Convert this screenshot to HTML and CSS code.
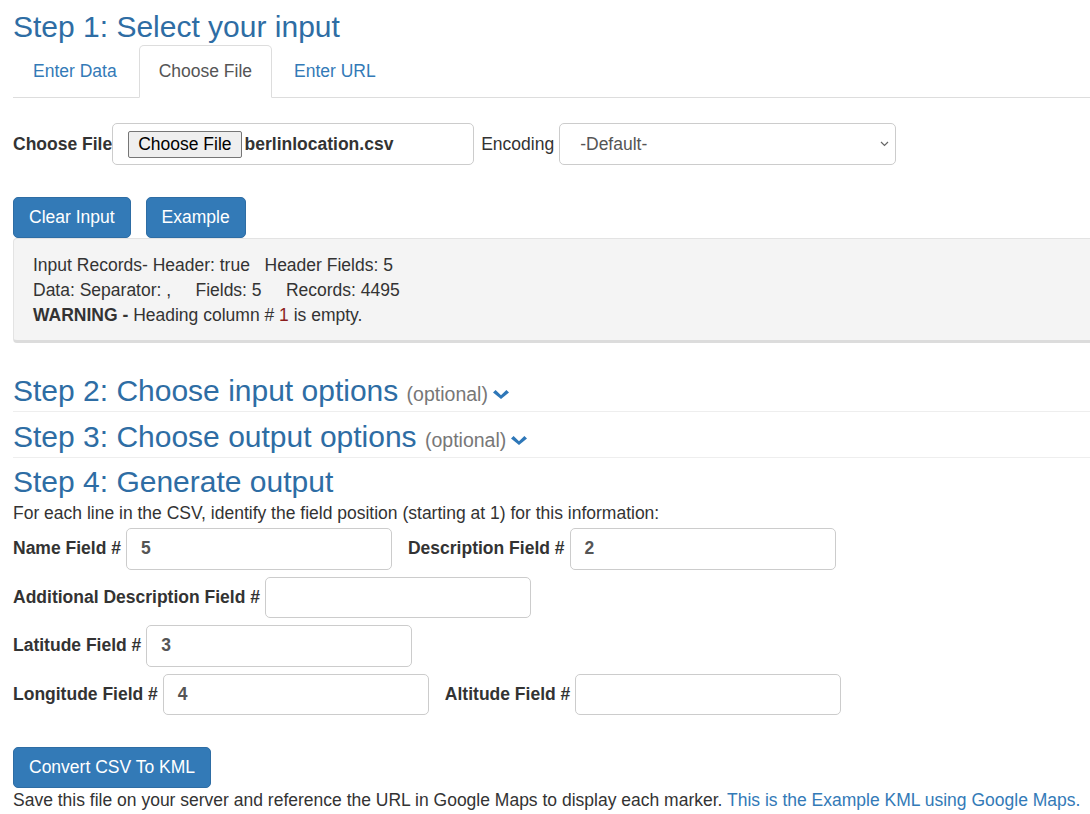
FILE: index.html
```html
<!DOCTYPE html>
<html>
<head>
<meta charset="utf-8">
<link rel="stylesheet" href="styles.css">
</head>
<body>
<div class="page">
  <h1 class="step-title">Step 1: Select your input</h1>
  <ul class="tabs">
    <li class="tab"><a>Enter Data</a></li>
    <li class="tab active"><a>Choose File</a></li>
    <li class="tab"><a>Enter URL</a></li>
  </ul>

  <div class="file-row">
    <label class="lbl">Choose File</label>
    <div class="file-box">
      <span class="file-btn">Choose File</span>
      <span class="file-name">berlinlocation.csv</span>
    </div>
    <span class="enc-lbl">Encoding</span>
    <div class="select">
      <span>-Default-</span>
      <svg class="sel-caret" width="9" height="6" viewBox="0 0 9 6"><path d="M1 1 L4.5 4.5 L8 1" fill="none" stroke="#666" stroke-width="1.2"/></svg>
    </div>
  </div>

  <div class="btn-row">
    <span class="btn">Clear Input</span>
    <span class="btn">Example</span>
  </div>

  <div class="well">
    <div>Input Records- Header: true&nbsp;&nbsp;&nbsp;Header Fields: 5</div>
    <div>Data: Separator: ,&nbsp;&nbsp;&nbsp;&nbsp;&nbsp;Fields: 5&nbsp;&nbsp;&nbsp;&nbsp;&nbsp;Records: 4495</div>
    <div><b>WARNING -</b> Heading column # <span class="warn-num">1</span> is empty.</div>
  </div>

  <div class="step collapsible first">
    <h2 class="step-title">Step 2: Choose input options <small>(optional)</small><svg class="chev" width="16" height="9" viewBox="0 0 16 9"><polygon points="0,2.6 2.6,0 8,5.2 13.4,0 16,2.6 8,9" fill="#2e77b8"/></svg></h2>
  </div>
  <div class="step collapsible second">
    <h2 class="step-title">Step 3: Choose output options <small>(optional)</small><svg class="chev" width="16" height="9" viewBox="0 0 16 9"><polygon points="0,2.6 2.6,0 8,5.2 13.4,0 16,2.6 8,9" fill="#2e77b8"/></svg></h2>
  </div>
  <div class="step last">
    <h2 class="step-title">Step 4: Generate output</h2>
  </div>
  <p class="intro">For each line in the CSV, identify the field position (starting at 1) for this information:</p>

  <div class="fields">
    <div class="frow">
      <label class="lbl">Name Field #</label><div class="inp">5</div>
      <label class="lbl next">Description Field #</label><div class="inp">2</div>
    </div>
    <div class="frow">
      <label class="lbl">Additional Description Field #</label><div class="inp"></div>
    </div>
    <div class="frow">
      <label class="lbl">Latitude Field #</label><div class="inp">3</div>
    </div>
    <div class="frow">
      <label class="lbl">Longitude Field #</label><div class="inp">4</div>
      <label class="lbl next">Altitude Field #</label><div class="inp"></div>
    </div>
  </div>

  <div class="convert-row"><span class="btn">Convert CSV To KML</span></div>
  <p class="note">Save this file on your server and reference the URL in Google Maps to display each marker. <a class="link">This is the Example KML using Google Maps.</a></p>
</div>
</body>
</html>
```

FILE: styles.css
```css
html, body {
  margin: 0;
  padding: 0;
  overflow: hidden;
  background: #fff;
}
body {
  font-family: "Liberation Sans", Arial, sans-serif;
  font-size: 17.5px;
  line-height: 25px;
  color: #333;
}
.page {
  padding-left: 13px;
  margin-right: -20px;
}
.step-title {
  font-weight: normal;
  font-size: 30px;
  line-height: 33px;
  color: #2e6da4;
  margin: 0;
}
h1.step-title {
  margin: 10px 0 2px;
}
.step-title small {
  font-size: 19.5px;
  color: #777;
}
.chev {
  margin-left: 5px;
  vertical-align: 2px;
}
.tabs {
  list-style: none;
  margin: 0;
  padding: 0;
  display: flex;
  border-bottom: 1px solid #ddd;
}
.tab {
  margin-right: 2px;
  margin-bottom: -1px;
}
.tab a {
  display: block;
  padding: 13px 19px;
  color: #337ab7;
  border: 1px solid transparent;
  border-radius: 5px 5px 0 0;
}
.tab.active a {
  color: #555;
  background: #fff;
  border-color: #ddd;
  border-bottom-color: transparent;
}
.file-row {
  display: flex;
  align-items: center;
  margin-top: 25px;
}
.lbl {
  font-weight: bold;
}
.file-box {
  width: 362px;
  height: 42px;
  box-sizing: border-box;
  border: 1px solid #ccc;
  border-radius: 5px;
  display: flex;
  align-items: center;
  padding-left: 15px;
}
.file-btn {
  display: inline-block;
  background: #efefef;
  border: 1px solid #767676;
  border-radius: 2px;
  line-height: 25px;
  padding: 0 9px;
  color: #000;
  margin-right: 3px;
}
.file-name {
  font-weight: bold;
}
.enc-lbl {
  margin-left: 7px;
  margin-right: 5px;
}
.select {
  width: 337px;
  height: 42px;
  box-sizing: border-box;
  border: 1px solid #ccc;
  border-radius: 5px;
  display: flex;
  align-items: center;
  justify-content: space-between;
  padding: 0 6px 0 20px;
  color: #555;
}
.btn-row {
  display: flex;
  gap: 15px;
  margin-top: 32px;
}
.btn {
  display: inline-block;
  background: #337ab7;
  color: #fff;
  border: 1px solid #2e6da4;
  border-radius: 5px;
  padding: 7px 15px;
  line-height: 25px;
}
.well {
  background: #f4f4f4;
  border: 1px solid #e3e3e3;
  border-bottom: 3px solid #dcdcdc;
  border-radius: 4px;
  padding: 14px 19px 12px;
  line-height: 25px;
}
.step.collapsible {
  border-bottom: 1px solid #eee;
}
.step.first {
  margin-top: 31px;
}
.step.second {
  margin-top: 8px;
}
.step.last {
  margin-top: 7px;
}
.intro {
  margin: 3px 0 2px;
}
.fields {
  display: flex;
  flex-direction: column;
  gap: 7px;
}
.frow {
  display: flex;
  align-items: center;
}
.frow .lbl {
  margin-right: 5px;
}
.frow .lbl.next {
  margin-left: 16px;
}
.inp {
  width: 266px;
  height: 41.5px;
  box-sizing: border-box;
  border: 1px solid #ccc;
  border-radius: 5px;
  padding: 0 14px;
  display: flex;
  align-items: center;
  font-weight: bold;
  color: #555;
}
.convert-row {
  margin-top: 31.5px;
}
.note {
  margin: 0;
}
.link {
  color: #337ab7;
}
.warn-num {
  color: #8b1c1c;
}
```
